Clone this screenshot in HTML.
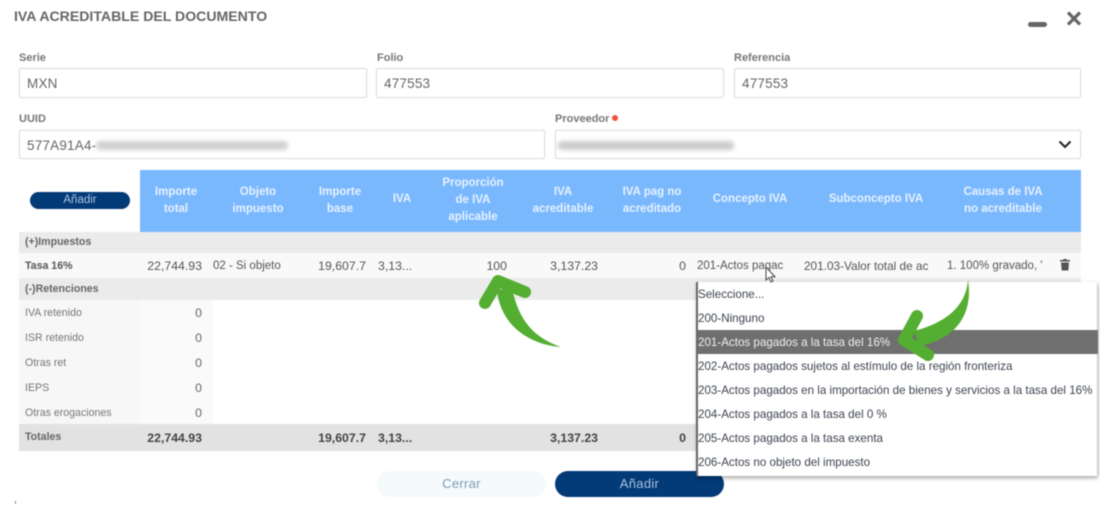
<!DOCTYPE html>
<html><head><meta charset="utf-8"><style>
html,body{margin:0;padding:0;background:#fff}
#p{position:relative;width:1100px;height:507px;overflow:hidden;background:#fff;font-family:"Liberation Sans",sans-serif;color:#555;filter:blur(.5px)}
.a{position:absolute}
.t{position:absolute;white-space:nowrap;line-height:16px;height:16px}
.l{font-size:11px;font-weight:bold;color:#777}
.i{position:absolute;box-sizing:border-box;background:#fff;border:1px solid #dedede;border-radius:2px;box-shadow:0 0 1px #e8e8e8;font-size:13.5px;color:#666;padding-left:7px;line-height:30px;letter-spacing:.2px}
.h{position:absolute;text-align:center;color:#e6f1ff;font-size:11.5px;font-weight:bold;line-height:17px;transform:translateX(-50%);white-space:nowrap}
.r{font-size:12.3px;color:#555}
.s{font-size:10.6px;color:#777}
.b{font-size:12.3px;font-weight:bold;color:#444}
.o{position:absolute;left:2px;height:24px;line-height:26px;font-size:11.6px;color:#3d4350;white-space:nowrap;width:400px}
</style></head><body><div id="p">
<div class="t" style="left:14px;top:8px;font-size:14.1px;font-weight:bold;color:#666">IVA ACREDITABLE DEL DOCUMENTO</div>
<div class="a" style="left:1028px;top:22px;width:19px;height:5px;border-radius:3px;background:#666"></div>
<svg class="a" style="left:1066px;top:11px" width="16" height="15" viewBox="0 0 16 15"><path d="M2 1.5L14 13.5M14 1.5L2 13.5" stroke="#666" stroke-width="3.2"/></svg>

<div class="t l" style="left:19px;top:50px">Serie</div>
<div class="t l" style="left:377px;top:50px">Folio</div>
<div class="t l" style="left:734px;top:50px">Referencia</div>
<div class="i" style="left:19px;top:68px;width:348px;height:30px">MXN</div>
<div class="i" style="left:376px;top:68px;width:348px;height:30px">477553</div>
<div class="i" style="left:734px;top:68px;width:347px;height:30px">477553</div>
<div class="t l" style="left:19px;top:111px">UUID</div>
<div class="t l" style="left:555px;top:111px">Proveedor</div>
<div class="a" style="left:612px;top:115px;width:6px;height:6px;border-radius:50%;background:#f4533f"></div>
<div class="i" style="left:19px;top:130px;width:526px;height:29px">577A91A4-</div>
<div class="a" style="left:96px;top:141px;width:192px;height:9px;background:#d0d0d0;border-radius:4px;filter:blur(2px)"></div>
<div class="i" style="left:555px;top:130px;width:526px;height:29px"></div>
<div class="a" style="left:558px;top:141px;width:176px;height:9px;background:#cccccc;border-radius:4px;filter:blur(2px)"></div>
<svg class="a" style="left:1058px;top:140px" width="14" height="9" viewBox="0 0 14 9"><path d="M1.5 1.5L7 7L12.5 1.5" fill="none" stroke="#222" stroke-width="2"/></svg>

<div class="a" style="left:30px;top:192px;width:100px;height:17px;border-radius:9px;background:#033a78;color:#a9c3e2;font-size:11.5px;line-height:17px;text-align:center">Añadir</div>
<div class="a" style="left:140px;top:170px;width:941px;height:62px;background:#7ab8fe"></div>
<div class="h" style="left:176px;top:184px">Importe<br>total</div>
<div class="h" style="left:258px;top:184px">Objeto<br>impuesto</div>
<div class="h" style="left:340px;top:184px">Importe<br>base</div>
<div class="h" style="left:402px;top:191px">IVA</div>
<div class="h" style="left:473px;top:175px">Proporción<br>de IVA<br>aplicable</div>
<div class="h" style="left:563px;top:184px">IVA<br>acreditable</div>
<div class="h" style="left:652px;top:184px">IVA pag no<br>acreditado</div>
<div class="h" style="left:750px;top:191px">Concepto IVA</div>
<div class="h" style="left:876px;top:191px">Subconcepto IVA</div>
<div class="h" style="left:1003px;top:184px">Causas de IVA<br>no acreditable</div>

<div class="a" style="left:19px;top:232px;width:1062px;height:21px;background:#ebebeb"></div>
<div class="a" style="left:19px;top:253px;width:1062px;height:25px;background:#f9f9f9"></div>
<div class="a" style="left:19px;top:278px;width:1062px;height:22px;background:#ebebeb"></div>
<div class="a" style="left:19px;top:300px;width:121px;height:124px;background:#f7f7f7"></div>
<div class="a" style="left:140px;top:300px;width:73px;height:124px;background:#fafafa"></div>
<div class="a" style="left:19px;top:424px;width:1062px;height:27px;background:#e2e2e2"></div>

<div class="t s" style="left:25px;top:234px;font-weight:bold;color:#666">(+)Impuestos</div>
<div class="t s" style="left:25px;top:258px;font-weight:bold;color:#555">Tasa 16%</div>
<div class="t r" style="right:898px;top:258px">22,744.93</div>
<div class="t" style="left:213px;top:258px;font-size:11.5px;color:#555">02 - Si objeto</div>
<div class="t r" style="right:734px;top:258px">19,607.7</div>
<div class="t r" style="left:378px;top:258px">3,13...</div>
<div class="t r" style="right:593px;top:258px">100</div>
<div class="t r" style="right:502px;top:258px">3,137.23</div>
<div class="t r" style="right:414px;top:258px">0</div>
<div class="t" style="left:697px;top:258px;width:88px;overflow:hidden;font-size:11.5px;color:#555">201-Actos pagac</div>
<div class="t" style="left:804px;top:258px;width:124px;overflow:hidden;font-size:11.8px;color:#555">201.03-Valor total de ac</div>
<div class="t" style="left:947px;top:258px;font-size:11.5px;color:#555">1. 100% gravado, '</div>
<svg class="a" style="left:1059px;top:258px" width="12" height="13" viewBox="0 0 12 13"><path d="M1 2H4L4.6 1H7.4L8 2H11V3.5H1ZM2 4.5H10L9.3 12.5H2.7Z" fill="#555"/></svg>

<div class="t s" style="left:25px;top:281px;font-weight:bold;color:#666">(-)Retenciones</div>
<div class="t s" style="left:25px;top:305px">IVA retenido</div>
<div class="t s" style="left:25px;top:330px">ISR retenido</div>
<div class="t s" style="left:25px;top:355px">Otras ret</div>
<div class="t s" style="left:25px;top:380px">IEPS</div>
<div class="t s" style="left:25px;top:405px">Otras erogaciones</div>
<div class="t r" style="right:898px;top:305px;color:#666">0</div>
<div class="t r" style="right:898px;top:330px;color:#666">0</div>
<div class="t r" style="right:898px;top:355px;color:#666">0</div>
<div class="t r" style="right:898px;top:380px;color:#666">0</div>
<div class="t r" style="right:898px;top:405px;color:#666">0</div>

<div class="t s" style="left:25px;top:429px;font-weight:bold;color:#666">Totales</div>
<div class="t b" style="right:898px;top:430px">22,744.93</div>
<div class="t b" style="right:734px;top:430px">19,607.7</div>
<div class="t b" style="left:378px;top:430px">3,13...</div>
<div class="t b" style="right:502px;top:430px">3,137.23</div>
<div class="t b" style="right:414px;top:430px">0</div>

<div class="a" style="left:377px;top:471px;width:169px;height:26px;border-radius:13px;background:#f5fafc;color:#7d9aba;font-size:13px;line-height:26px;text-align:center;letter-spacing:.3px">Cerrar</div>
<div class="a" style="left:555px;top:471px;width:169px;height:26px;border-radius:13px;background:#033a78;color:#a9c3e2;font-size:13px;line-height:25px;text-align:center;letter-spacing:.3px">Añadir</div>
<div class="a" style="left:15px;top:501px;width:1px;height:3px;background:#888"></div>

<div class="a" style="left:696px;top:282px;width:401px;height:194px;background:#fff;border-left:2px solid #666;box-sizing:border-box;box-shadow:1px 2px 4px rgba(0,0,0,.35)">
<div class="o" style="left:0;top:0">Seleccione...</div>
<div class="o" style="left:0;top:24px">200-Ninguno</div>
<div class="o" style="left:0;top:48px;background:#6f6f6f;color:#f0f0f0">201-Actos pagados a la tasa del 16%</div>
<div class="o" style="left:0;top:72px">202-Actos pagados sujetos al estímulo de la región fronteriza</div>
<div class="o" style="left:0;top:96px">203-Actos pagados en la importación de bienes y servicios a la tasa del 16%</div>
<div class="o" style="left:0;top:120px">204-Actos pagados a la tasa del 0 %</div>
<div class="o" style="left:0;top:144px">205-Actos pagados a la tasa exenta</div>
<div class="o" style="left:0;top:168px">206-Actos no objeto del impuesto</div>
</div>

<svg class="a" style="left:764px;top:266px" width="14" height="18" viewBox="0 0 14 18"><path d="M2 1V14L5 11.5L7 16L9 15L7 10.8H11Z" fill="#fff" stroke="#444" stroke-width="1"/></svg>

<svg class="a" style="left:0;top:0" width="1100" height="507" viewBox="0 0 1100 507">
<g fill="#54ae32">
<path d="M968 280C966 305 948 322 914 331L919 346C952 340 974 318 968 280Z"/>
<path d="M497 290C500 322 525 344 561 347C535 338 519 322 512 288Z"/>
</g>
<g fill="none" stroke="#54ae32" stroke-width="12" stroke-linecap="round" stroke-linejoin="round">
<path d="M917 316L904 340L928 355"/>
<path d="M485 303L498 281L525 292"/>
</g>
</svg>
</div></body></html>
